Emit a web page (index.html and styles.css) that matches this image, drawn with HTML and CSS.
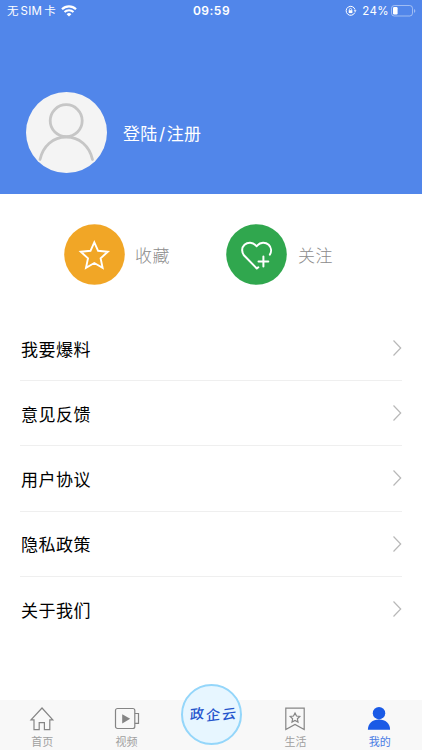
FILE: index.html
```html
<!DOCTYPE html>
<html lang="zh-CN">
<head>
  <meta charset="UTF-8" />
  <meta name="viewport" content="width=device-width, initial-scale=1" />
  <title>我的</title>
  <link rel="stylesheet" href="styles.css">
</head>
<body>

  <header class="header">
    <div class="status-bar">
      <div class="status-left">
        <span class="carrier">无<span class="sim">SIM</span>卡</span>
        <svg class="wifi" viewBox="0 0 16 12" width="16" height="12">
          <path d="M1 4.2a10 10 0 0 1 14 0" fill="none" stroke="#fff" stroke-width="2.2" />
          <path d="M3.5 7a6.4 6.4 0 0 1 9 0" fill="none" stroke="#fff" stroke-width="2" />
          <path d="M8 11.6L5.6 9.2a3.4 3.4 0 0 1 4.8 0z" fill="#fff" />
        </svg>
      </div>
      <span class="time">09:59</span>
      <div class="status-right">
        <svg class="lock" viewBox="0 0 12 12" width="12" height="12" fill="none" stroke="#fff">
          <path d="M9.8 7.6A4.5 4.5 0 1 1 10 4.6" stroke-width="1" />
          <path d="M8.7 5.2h2.8L10.1 7.2z" fill="#fff" stroke="none" />
          <path d="M4.4 5.4V4.5a1.1 1.1 0 0 1 2.2 0v.9" stroke-width=".8" />
          <path d="M3.7 5.2h3.7v2.9H3.7z" fill="#fff" stroke="none" />
        </svg>
        <span class="percent">24%</span>
        <svg class="battery" viewBox="0 0 25 12" width="25" height="12">
          <rect x=".5" y=".5" width="21" height="10.5" rx="2.8" fill="none" stroke="#fff" stroke-opacity=".45" />
          <rect x="2" y="2" width="4.6" height="7.5" rx="1.2" fill="#fff" />
          <path d="M23 4v3.8q1.3-.5 1.3-1.9T23 4z" fill="#fff" fill-opacity=".45" />
        </svg>
      </div>
    </div>

    <div class="profile">
      <svg class="avatar" viewBox="0 0 81 81" width="81" height="81">
        <circle cx="40.5" cy="40.5" r="40.5" fill="#f4f4f4" />
        <g fill="none" stroke="#c6c6c6" stroke-width="2.8" stroke-linecap="round">
          <circle cx="40.2" cy="28.7" r="16" />
          <path d="M14 67.5C17 54 27 45 40.2 45S63.5 54 66.5 67.5" />
        </g>
      </svg>
      <a class="login">登陆<span class="slash">/</span>注册</a>
    </div>
  </header>

  <div class="shortcuts">
    <div class="shortcut">
      <svg viewBox="0 0 61 61" width="61" height="61">
        <circle cx="30.5" cy="30.5" r="30.3" fill="#f1a626" />
        <path d="M30.3 18.3l3.8 8.5 9.7 1-7.2 6.5 2 9.6-8.3-4.9-8.3 4.9 2-9.6-7.2-6.5 9.7-1z" fill="none" stroke="#fff" stroke-width="1.9" />
      </svg>
      <span>收藏</span>
    </div>
    <div class="shortcut">
      <svg viewBox="0 0 61 61" width="61" height="61">
        <circle cx="30.5" cy="30.5" r="30.3" fill="#30a74e" />
        <g fill="none" stroke="#fff" stroke-width="2" stroke-linecap="round" stroke-linejoin="round">
          <path d="M32.3 43.3l-1.5 1.2L18.4 31.8c-3.1-3.4-2.9-8.2.1-11 3.3-3 8.3-2.8 11.3.6l.8.8.8-.8c3-3.4 8-3.6 11.3-.6 2.5 2.5 3.1 6.6 1.2 9.8" />
          <path d="M37.4 32.6v9.8M32.5 37.5h9.8" />
        </g>
      </svg>
      <span>关注</span>
    </div>
  </div>

  <ul class="menu">
    <li><span>我要爆料</span><svg class="arrow" viewBox="0 0 10 18" width="10" height="18"><path d="M1.5 1.5L8.7 9l-7.2 7.5" /></svg></li>
    <li><span>意见反馈</span><svg class="arrow" viewBox="0 0 10 18" width="10" height="18"><path d="M1.5 1.5L8.7 9l-7.2 7.5" /></svg></li>
    <li><span>用户协议</span><svg class="arrow" viewBox="0 0 10 18" width="10" height="18"><path d="M1.5 1.5L8.7 9l-7.2 7.5" /></svg></li>
    <li><span>隐私政策</span><svg class="arrow" viewBox="0 0 10 18" width="10" height="18"><path d="M1.5 1.5L8.7 9l-7.2 7.5" /></svg></li>
    <li><span>关于我们</span><svg class="arrow" viewBox="0 0 10 18" width="10" height="18"><path d="M1.5 1.5L8.7 9l-7.2 7.5" /></svg></li>
  </ul>

  <nav class="tabbar">
    <a class="tab">
      <svg viewBox="0 0 26 26" width="26" height="26">
        <path d="M13 2L2 13.8h3v9.8h5.2v-7h5.2v7h5.4v-9.8h3z" />
      </svg>
      <span>首页</span>
    </a>
    <a class="tab">
      <svg viewBox="0 0 26 26" width="26" height="26">
        <rect x="1.5" y="2.5" width="19.3" height="20" rx="2" />
        <path d="M20.8 7.5h3.7v9.8h-3.7" />
        <path d="M8.2 8.2v9.2l8-4.6z" fill="#858585" stroke="none" />
      </svg>
      <span>视频</span>
    </a>
    <div class="tab">
      <a class="cloud"><span>政</span><span class="c2">企</span><span>云</span></a>
    </div>
    <a class="tab">
      <svg viewBox="0 0 26 26" width="26" height="26">
        <path d="M3.8 2.2h18.4v21.3L13 18.4l-9.2 5.1z" />
        <path d="M13 7l1.5 3 3.3.5-2.4 2.3.6 3.3-3-1.6-3 1.6.6-3.3-2.4-2.3 3.3-.5z" />
      </svg>
      <span>生活</span>
    </a>
    <a class="tab active">
      <svg viewBox="0 0 26 26" width="26" height="26">
        <circle cx="13" cy="7.2" r="6.2" />
        <path d="M1.9 23.7c0-6.4 4.6-10.2 11.1-10.2s11.1 3.8 11.1 10.2z" />
      </svg>
      <span>我的</span>
    </a>
  </nav>

</body>
</html>
```

FILE: styles.css
```css
* {
  box-sizing: border-box;
  margin: 0;
  padding: 0;
}

body {
  font-family: Inter, 'Noto Sans CJK SC', sans-serif;
  background-color: #fff;
  color: #111;
  height: 750px;
  display: flex;
  flex-direction: column;
  overflow: hidden;
}

svg {
  display: block;
  flex: none;
}

.header {
  height: 194px;
  background-color: #5186ea;
  color: #fff;
}

.status-bar {
  display: grid;
  grid-template-columns: 1fr auto 1fr;
  align-items: center;
  height: 22px;
  padding: 0 6px 0 7px;
  font-size: 12px;
  line-height: 22px;
}

.status-left,
.status-right {
  display: flex;
  align-items: center;
}

.status-right {
  justify-content: flex-end;
}

.carrier {
  font-size: 11.5px;
}

.sim {
  letter-spacing: 0.3px;
  margin: 0 2px;
}

.wifi {
  margin-left: 5px;
}

.time {
  font-weight: 600;
  letter-spacing: 0.5px;
}

.percent {
  margin: 0 2px 0 5px;
  font-size: 11.5px;
  letter-spacing: 0.4px;
}

.profile {
  display: flex;
  align-items: center;
  padding: 70px 0 0 26px;
}

.login {
  margin-left: 16px;
  font-size: 17px;
  letter-spacing: 0.2px;
}

.slash {
  margin: 0 1.5px;
}

.shortcuts {
  display: flex;
  padding: 30px 0 0 64px;
  height: 122px;
}

.shortcut {
  display: flex;
  align-items: center;
  width: 162px;
  height: 61px;
  font-size: 17px;
  font-weight: 300;
  letter-spacing: 0.4px;
  color: #8c8c8c;
}

.shortcut span {
  margin-left: 10px;
}

.shortcut:last-child span {
  margin-left: 11px;
}

.menu {
  list-style: none;
  padding: 0 20px;
  flex: 1;
}

.menu li {
  display: flex;
  align-items: center;
  justify-content: space-between;
  height: 65.2px;
  padding-left: 1px;
  font-size: 17px;
  letter-spacing: 0.5px;
  color: #000;
  border-bottom: 1px solid #efefef;
}

.menu li:last-child {
  border-bottom: none;
}

.arrow {
  fill: none;
  stroke: #b8b8b8;
  stroke-width: 1.2;
}

.tabbar {
  display: flex;
  height: 50px;
  background-color: #f8f8f8;
}

.tab {
  flex: 1;
  display: flex;
  flex-direction: column;
  align-items: center;
  padding-top: 6px;
  font-size: 11px;
  line-height: 20px;
  color: #a0a0a0;
}

.tab svg {
  fill: none;
  stroke: #858585;
  stroke-width: 1.2;
}

.tab.active {
  color: #4a7ce4;
}

.tab.active svg {
  fill: #1a5ae6;
  stroke: none;
  margin-left: -2px;
}

/* round button rises above the bar */
.cloud {
  display: flex;
  align-items: center;
  justify-content: center;
  flex: none;
  width: 61px;
  height: 61px;
  margin-top: -22px;
  padding: 0 0 2px 4px;
  border: 2.5px solid #94d6fa;
  border-radius: 50%;
  background-color: #e7f6ff;
  color: #2454cc;
  font-size: 14px;
  font-weight: 500;
}

.cloud span {
  margin: 0 0.9px;
  transform: skewX(-10deg) rotate(-8deg);
}

.cloud .c2 {
  transform: translateY(1px) skewX(-8deg) rotate(-8deg);
}
```
